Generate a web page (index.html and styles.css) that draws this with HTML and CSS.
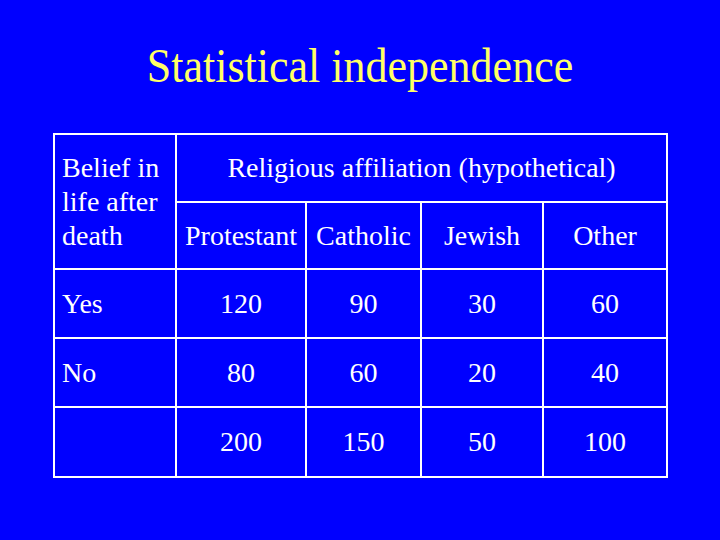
FILE: index.html
```html
<!DOCTYPE html>
<html>
<head>
<meta charset="utf-8">
<link rel="stylesheet" href="styles.css">
</head>
<body>
<div class="slide">
  <h1 class="title">Statistical independence</h1>
  <table class="grid">
    <colgroup>
      <col class="c1"><col class="c2"><col class="c3"><col class="c4"><col class="c5">
    </colgroup>
    <tr class="r1">
      <td class="label" rowspan="2">Belief in<br>life after<br>death</td>
      <td class="center" colspan="4">Religious affiliation (hypothetical)</td>
    </tr>
    <tr class="r2">
      <td class="center">Protestant</td>
      <td class="center">Catholic</td>
      <td class="center">Jewish</td>
      <td class="center">Other</td>
    </tr>
    <tr class="r3">
      <td class="label">Yes</td>
      <td class="center">120</td>
      <td class="center">90</td>
      <td class="center">30</td>
      <td class="center">60</td>
    </tr>
    <tr class="r4">
      <td class="label">No</td>
      <td class="center">80</td>
      <td class="center">60</td>
      <td class="center">20</td>
      <td class="center">40</td>
    </tr>
    <tr class="r5">
      <td class="label"></td>
      <td class="center">200</td>
      <td class="center">150</td>
      <td class="center">50</td>
      <td class="center">100</td>
    </tr>
  </table>
</div>
</body>
</html>
```

FILE: styles.css
```css
html, body {
  margin: 0;
  padding: 0;
  background: #0000ff;
}
.slide {
  width: 720px;
  height: 540px;
  padding-top: 43px;
  box-sizing: border-box;
  font-family: "Liberation Serif", "Times New Roman", serif;
}
.title {
  margin: 0;
  font-size: 44px;
  font-weight: normal;
  line-height: 50px;
  color: #ffff66;
  text-align: center;
  transform: scaleY(1.12);
  transform-origin: 50% 40px;
}
.grid {
  margin: 40px 0 0 53px;
  border-collapse: collapse;
  table-layout: fixed;
  width: 615px;
  color: #ffffff;
  font-size: 28px;
}
.grid td {
  border: 2px solid #ffffff;
  padding: 0;
  vertical-align: middle;
  line-height: 34px;
}
.c1 { width: 122px; }
.c2 { width: 130px; }
.c3 { width: 115px; }
.c4 { width: 122px; }
.c5 { width: 124px; }
.r1 { height: 68px; }
.r2 { height: 67px; }
.r3 { height: 69px; }
.r4 { height: 69px; }
.r5 { height: 70px; }
.label {
  text-align: left;
  padding-left: 7px !important;
}
.center {
  text-align: center;
}
```
